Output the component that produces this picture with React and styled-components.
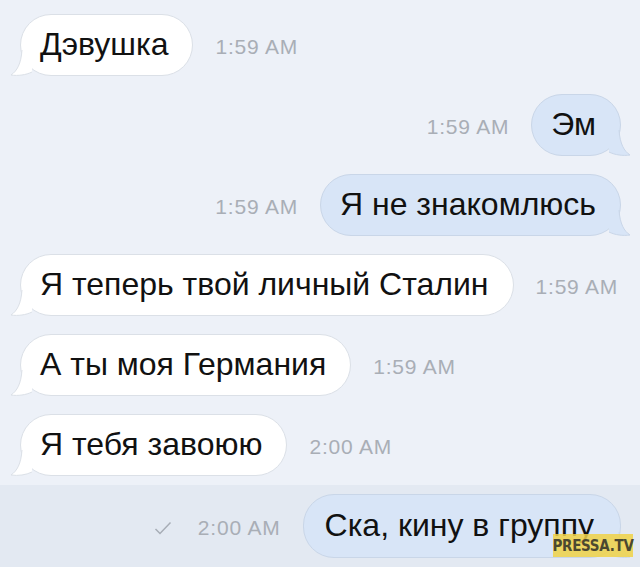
import React from 'react'
import styled, { createGlobalStyle } from 'styled-components'

const messages = [
    { id: 1, side: 'in', text: 'Дэвушка', time: '1:59 AM' },
    { id: 2, side: 'out', text: 'Эм', time: '1:59 AM' },
    { id: 3, side: 'out', text: 'Я не знакомлюсь', time: '1:59 AM' },
    { id: 4, side: 'in', text: 'Я теперь твой личный Сталин', time: '1:59 AM' },
    { id: 5, side: 'in', text: 'А ты моя Германия', time: '1:59 AM' },
    { id: 6, side: 'in', text: 'Я тебя завоюю', time: '2:00 AM' },
]

const lastMessage = { id: 7, side: 'out', text: 'Ска, кину в группу', time: '2:00 AM', read: true }

const GlobalStyle = createGlobalStyle`
    html, body {
        margin: 0;
        padding: 0;
        background: #edf1f8;
    }
    * { box-sizing: border-box; }
`

const Tail = ({ side }) => {
    const fill = side === 'out' ? '#d8e5f7' : '#ffffff'
    const stroke = side === 'out' ? '#c9d6e8' : '#dbe0e7'
    return (
        <TailSvg side={side} width="22" height="26" viewBox="0 0 22 26">
            <g transform={side === 'out' ? 'translate(22 0) scale(-1 1)' : undefined}>
                <path d="M12 0 L22 0 L22 22 C16 25, 8 26, 1 25 C7 21, 11 14, 12 0 Z" fill={fill} />
                <path d="M12 0 C11 14, 7 21, 1 25 C8 26, 16 25, 22 22" fill="none" stroke={stroke} strokeWidth="1" />
            </g>
        </TailSvg>
    )
}

const CheckMark = () => (
    <svg width="18" height="14" viewBox="0 0 18 14">
        <polyline points="1.5,8 6,12.5 16.5,1.5" fill="none" stroke="#a7adb6" strokeWidth="1.5" />
    </svg>
)

const Message = ({ msg }) => (
    <Row side={msg.side}>
        <Bubble side={msg.side} wide={msg.read}>
            {msg.text}
            <Tail side={msg.side} />
        </Bubble>
        <Meta>
            {msg.read && <CheckMark />}
            <Time>{msg.time}</Time>
        </Meta>
    </Row>
)

export default function App() {
    return (
        <Page>
            <GlobalStyle />
            <Thread>
                {messages.map(m => <Message key={m.id} msg={m} />)}
            </Thread>
            <SelectedBand>
                <Message msg={lastMessage} />
                <Watermark>PRESSA.TV</Watermark>
            </SelectedBand>
        </Page>
    )
}

const Page = styled.div`
    width: 640px;
    height: 567px;
    overflow: hidden;
    background: #edf1f8;
    font-family: "Liberation Sans", Arial, sans-serif;
    display: flex;
    flex-direction: column;
`

const Thread = styled.div`
    display: flex;
    flex-direction: column;
    gap: 18px;
    padding-top: 14px;
`

const SelectedBand = styled.div`
    position: relative;
    margin-top: 9px;
    padding-top: 9px;
    flex-grow: 1;
    background: #e3e9f2;
`

const Row = styled.div`
    display: flex;
    align-items: center;
    gap: 22px;
    flex-direction: ${props => props.side === 'out' ? 'row-reverse' : 'row'};
    padding: ${props => props.side === 'out' ? '0 19px 0 0' : '0 0 0 20px'};
`

const Bubble = styled.div`
    position: relative;
    height: ${props => props.wide ? '64px' : '62px'};
    display: flex;
    align-items: center;
    padding: ${props => props.wide ? '0 26px 2px 21px' : '0 24px 2px 19px'};
    border-radius: 31px;
    font-size: 32px;
    color: #111111;
    white-space: nowrap;
    background: ${props => props.side === 'out' ? '#d8e5f7' : '#ffffff'};
    border: 1px solid ${props => props.side === 'out' ? '#c9d6e8' : '#dbe0e7'};
`

const TailSvg = styled.svg`
    position: absolute;
    bottom: -1px;
    left: ${props => props.side === 'out' ? 'auto' : '-11px'};
    right: ${props => props.side === 'out' ? '-11px' : 'auto'};
`

const Meta = styled.div`
    display: flex;
    align-items: center;
    gap: 26px;
    margin-top: 4px;
`

const Time = styled.span`
    font-size: 21px;
    color: #a9aeb6;
    letter-spacing: 0.8px;
`

const Watermark = styled.div`
    position: absolute;
    left: 553px;
    top: 49px;
    width: 80px;
    height: 23px;
    display: flex;
    align-items: center;
    justify-content: center;
    background: rgba(240, 210, 70, 0.85);
    color: #4b4830;
    font-family: "DejaVu Sans Condensed", "DejaVu Sans", sans-serif;
    font-weight: bold;
    font-size: 15px;
    letter-spacing: -0.3px;
`
